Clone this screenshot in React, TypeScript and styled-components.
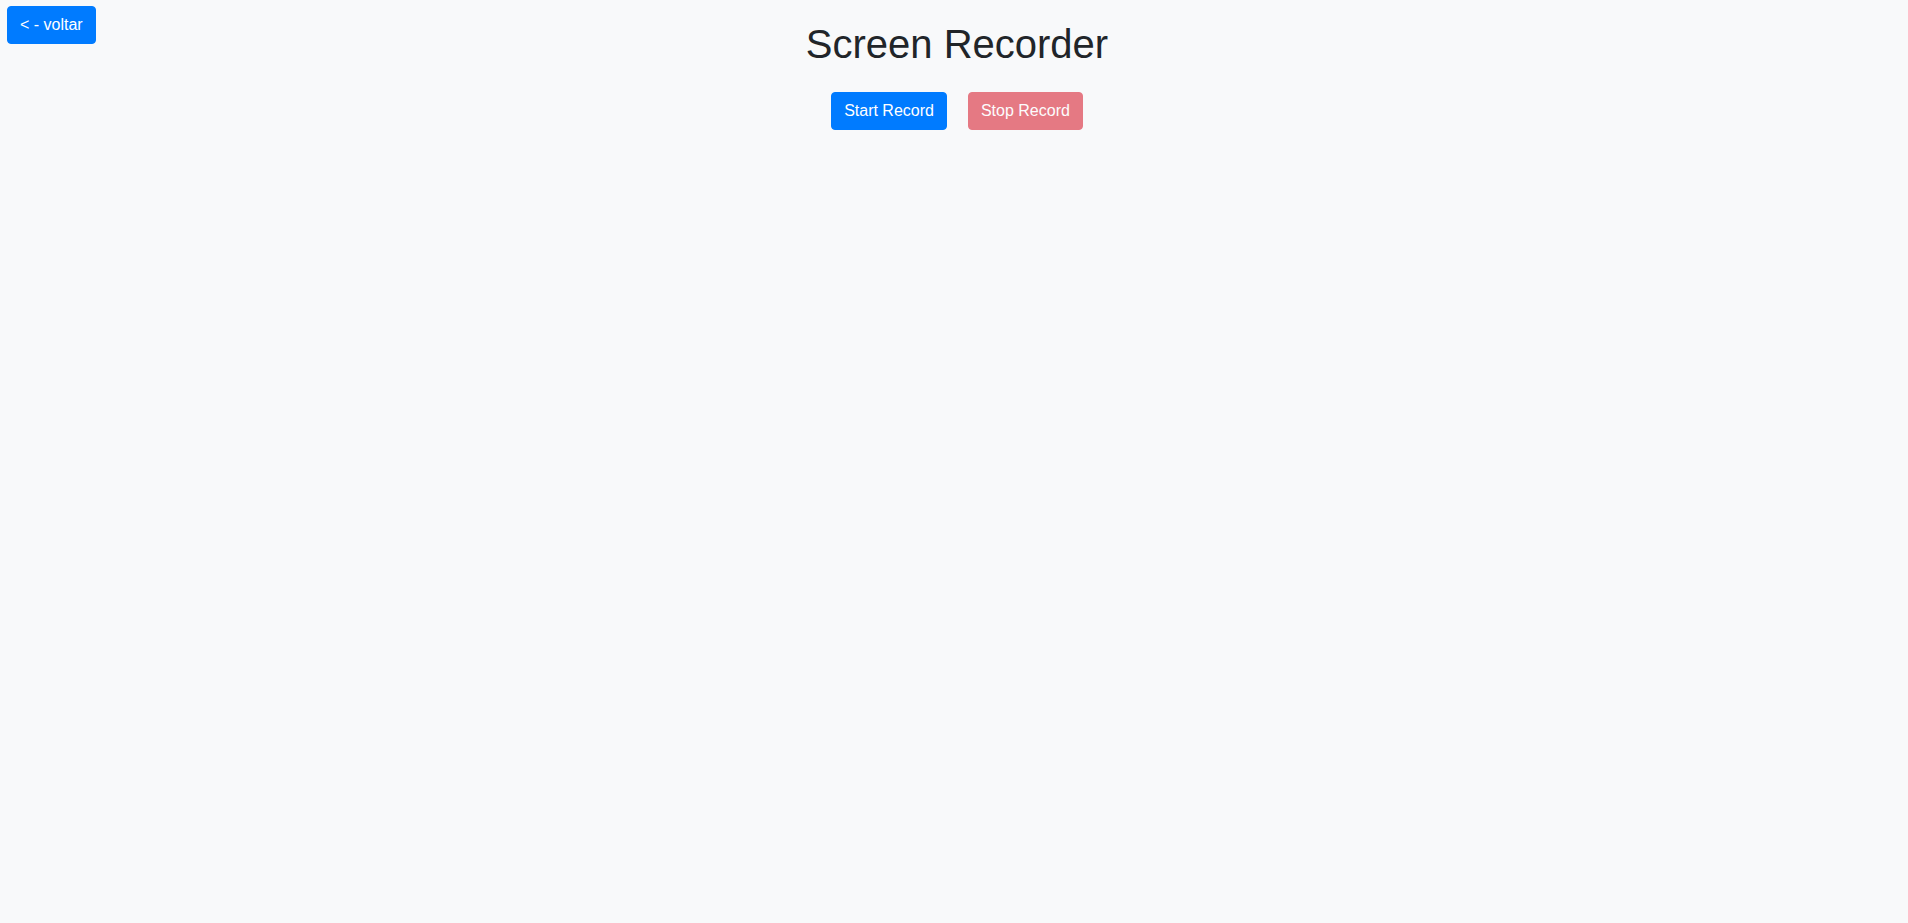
import styled, { createGlobalStyle } from 'styled-components';

const GlobalStyle = createGlobalStyle`
  html, body {
    margin: 0;
    padding: 0;
    background: #f8f9fa;
    color: #212529;
    font-family: "Liberation Sans", Arial, sans-serif;
  }
`;

const Page = styled.div`
  display: grid;
  grid-template-columns: 1fr auto 1fr;
  align-items: start;
  min-height: 923px;
`;

const BackCell = styled.div`
  padding: 6px 0 0 7px;
`;

const Center = styled.div`
  display: flex;
  flex-direction: column;
  align-items: center;
  padding: 20px 0 0 6px;
`;

const Title = styled.h1`
  font-size: 40px;
  font-weight: 500;
  line-height: 1.2;
  margin: 0 0 8px;
`;

const Actions = styled.div`
  display: flex;
  gap: 21px;
  margin-top: 16px;
`;

const Button = styled.button<{ $variant: 'primary' | 'danger' }>`
  font-family: inherit;
  font-size: 16px;
  line-height: 24px;
  padding: 6px 12px;
  border: 1px solid ${p => (p.$variant === 'primary' ? '#007bff' : '#dc3545')};
  border-radius: 4px;
  color: #fff;
  background: ${p => (p.$variant === 'primary' ? '#007bff' : '#dc3545')};
  cursor: pointer;

  &:disabled {
    opacity: 0.65;
    cursor: default;
  }
`;

const App = () => {
    return (
        <>
            <GlobalStyle />
            <Page>
                <BackCell>
                    <Button $variant="primary">&lt; - voltar</Button>
                </BackCell>
                <Center>
                    <Title>Screen Recorder</Title>
                    <Actions>
                        <Button $variant="primary">Start Record</Button>
                        <Button $variant="danger" disabled>
                            Stop Record
                        </Button>
                    </Actions>
                </Center>
                <div />
            </Page>
        </>
    );
};

export default App;
